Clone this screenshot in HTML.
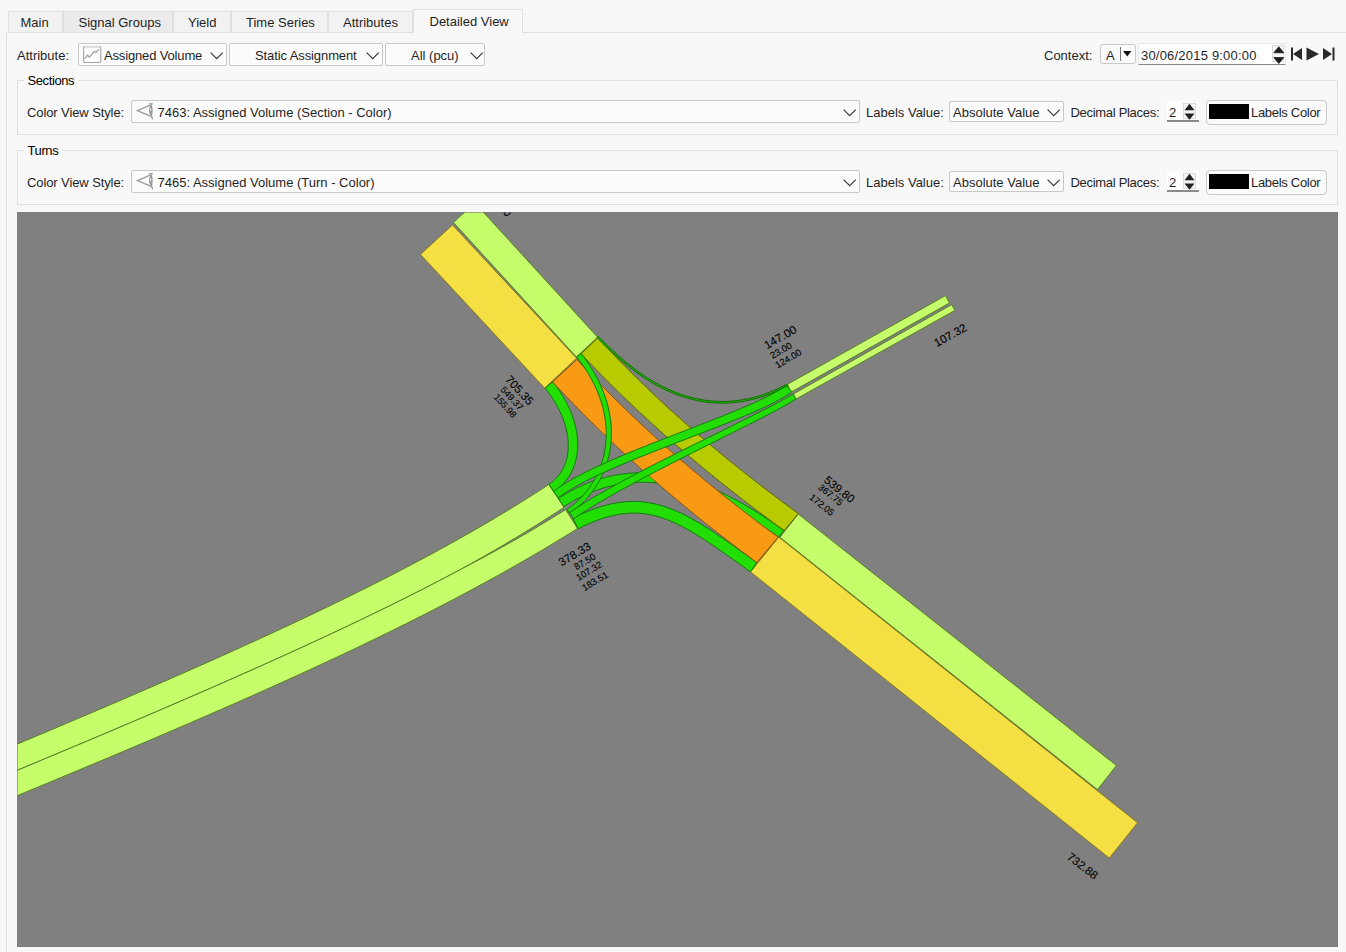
<!DOCTYPE html>
<html><head><meta charset="utf-8"><style>
html,body{margin:0;padding:0;width:1346px;height:952px;overflow:hidden;background:#f7f7f7;}
.t{position:absolute;font-family:"Liberation Sans",sans-serif;font-size:13px;line-height:15px;color:#1f1f1f;white-space:nowrap;}
svg text{font-family:"Liberation Sans",sans-serif;fill:#000;stroke:#000;stroke-width:0.12px;}
</style></head><body>
<div style="position:absolute;left:8px;top:11px;width:55px;height:21px;box-sizing:border-box;background:#f2f2f2;border:1px solid #e0e0e0;border-bottom:none;"></div>
<div class="t" style="left:20.5px;top:15px;">Main</div>
<div style="position:absolute;left:63px;top:11px;width:110px;height:21px;box-sizing:border-box;background:#ebebeb;border:1px solid #e0e0e0;border-bottom:none;"></div>
<div class="t" style="left:78.5px;top:15px;">Signal Groups</div>
<div style="position:absolute;left:173px;top:11px;width:58px;height:21px;box-sizing:border-box;background:#f2f2f2;border:1px solid #e0e0e0;border-bottom:none;"></div>
<div class="t" style="left:188px;top:15px;">Yield</div>
<div style="position:absolute;left:231px;top:11px;width:97px;height:21px;box-sizing:border-box;background:#f2f2f2;border:1px solid #e0e0e0;border-bottom:none;"></div>
<div class="t" style="left:246px;top:15px;">Time Series</div>
<div style="position:absolute;left:328px;top:11px;width:85px;height:21px;box-sizing:border-box;background:#f2f2f2;border:1px solid #e0e0e0;border-bottom:none;"></div>
<div class="t" style="left:343px;top:15px;">Attributes</div>
<div style="position:absolute;left:6px;top:32px;width:1340px;height:920px;box-sizing:border-box;background:#f8f8f8;border-left:1px solid #e0e0e0;border-top:1px solid #e0e0e0;"></div>
<div style="position:absolute;left:413px;top:9px;width:110px;height:24px;box-sizing:border-box;background:#f8f8f8;border:1px solid #e0e0e0;border-bottom:none;"></div>
<div class="t" style="left:429.5px;top:14px;">Detailed View</div>
<div class="t" style="left:17px;top:48px;">Attribute:</div>
<div style="position:absolute;left:78px;top:43px;width:149px;height:23px;box-sizing:border-box;background:#fbfbfb;border:1px solid #c9c9c9;border-radius:2px;"></div>
<svg style="position:absolute;left:83px;top:46px" width="19" height="18"><rect x="0.6" y="0.6" width="17.2" height="15.9" rx="1.2" fill="#fdfdfd" stroke="#a4a4a4" stroke-width="1.1"/><path d="M1.5 0.6 H17" stroke="#d6d6d6" stroke-width="1.2"/><path d="M1.6 12.7 L4.6 9.2 L6.5 11.1 L11.3 5.3 L12.9 6.5 L15.9 3.2" fill="none" stroke="#9c9c9c" stroke-width="1.25"/></svg>
<div class="t" style="left:104px;top:48px;letter-spacing:-0.15px;">Assigned Volume</div>
<svg style="position:absolute;left:209.5px;top:51.5px" width="14" height="8"><path d="M0.6 0.6 L6.7 6.7 L12.8 0.6" fill="none" stroke="#383838" stroke-width="1.15"/></svg>
<div style="position:absolute;left:229px;top:43px;width:154px;height:23px;box-sizing:border-box;background:#fbfbfb;border:1px solid #c9c9c9;border-radius:2px;"></div>
<div class="t" style="left:255px;top:48px;letter-spacing:-0.1px;">Static Assignment</div>
<svg style="position:absolute;left:365.5px;top:51.5px" width="14" height="8"><path d="M0.6 0.6 L6.7 6.7 L12.8 0.6" fill="none" stroke="#383838" stroke-width="1.15"/></svg>
<div style="position:absolute;left:385px;top:43px;width:100px;height:23px;box-sizing:border-box;background:#fbfbfb;border:1px solid #c9c9c9;border-radius:2px;"></div>
<div class="t" style="left:411px;top:48px;">All (pcu)</div>
<svg style="position:absolute;left:469.5px;top:51.5px" width="14" height="8"><path d="M0.6 0.6 L6.7 6.7 L12.8 0.6" fill="none" stroke="#383838" stroke-width="1.15"/></svg>
<div class="t" style="left:1044px;top:48px;">Context:</div>
<div style="position:absolute;left:1100px;top:44px;width:36px;height:20px;box-sizing:border-box;background:#fbfbfb;border:1px solid #c9c9c9;border-radius:3px;"></div>
<div class="t" style="left:1106px;top:48px;">A</div>
<div style="position:absolute;left:1120px;top:47px;width:1px;height:14px;background:#777;"></div>
<svg style="position:absolute;left:1123px;top:51px" width="9" height="6"><path d="M0 0 L8.5 0 L4.25 5.5 Z" fill="#111"/></svg>
<div style="position:absolute;left:1138px;top:43px;width:148px;height:22px;box-sizing:border-box;background:#fff;border:1px solid #e8e8e8;border-bottom:1.5px solid #8a8a8a;border-radius:2px 2px 0 0;"></div>
<div class="t" style="left:1141px;top:48px;letter-spacing:0.2px;">30/06/2015 9:00:00</div>
<div style="position:absolute;left:1272px;top:45px;width:12px;height:17px;box-sizing:border-box;background:#f6f6f6;border:1px solid #dadada;border-radius:1px;"></div>
<svg style="position:absolute;left:1271.5px;top:45.5px" width="14" height="19"><path d="M1.8 6.8 L6.8 0.8 L11.8 6.8 Z M1.8 11.5 L11.8 11.5 L6.8 17.5 Z" fill="#1e1e1e" stroke="#1e1e1e" stroke-width="0.8" stroke-linejoin="round"/></svg>
<svg style="position:absolute;left:1290px;top:47px" width="48" height="14"><path d="M1 0.5 h2 v13 h-2 Z M3 7 L12 1 L12 13 Z M16.5 0.5 L29 7 L16.5 13.5 Z M33 1 L42 7 L33 13 Z M42.5 0.5 h2 v13 h-2 Z" fill="#2a2a2a"/></svg>
<div style="position:absolute;left:17px;top:80px;width:1321px;height:55px;box-sizing:border-box;border:1px solid #e0e0e0;"></div>
<div style="position:absolute;left:24px;top:74px;width:53.5px;height:10px;background:#f8f8f8;"></div>
<div class="t" style="left:27.5px;top:73px;color:#000;letter-spacing:-0.4px;">Sections</div>
<div class="t" style="left:27px;top:104.9px;letter-spacing:-0.1px;">Color View Style:</div>
<div style="position:absolute;left:131px;top:100px;width:729px;height:23px;box-sizing:border-box;background:#fbfbfb;border:1px solid #c9c9c9;border-radius:2px;"></div>
<svg style="position:absolute;left:136px;top:103px" width="19" height="18"><g fill="none" stroke="#999" stroke-width="1.3"><path d="M15.5 1.6 L1.2 7.6 L15.8 13.7"/><path d="M13.3 0.6 L16.8 0.9 M15.8 13.7 L16.6 16.4"/></g><path d="M15.5 1.6 C12.3 4 12 11 15.8 13.7 C17 11 17 4 15.5 1.6 Z" fill="#9a9a9a"/><ellipse cx="14.6" cy="6.8" rx="0.7" ry="1.2" fill="#eee"/></svg>
<div class="t" style="left:157.5px;top:104.9px;">7463: Assigned Volume (Section - Color)</div>
<svg style="position:absolute;left:842.5px;top:109px" width="14" height="8"><path d="M0.6 0.6 L6.7 6.7 L12.8 0.6" fill="none" stroke="#383838" stroke-width="1.15"/></svg>
<div class="t" style="left:866px;top:104.9px;">Labels Value:</div>
<div style="position:absolute;left:949px;top:101px;width:115px;height:21px;box-sizing:border-box;background:#fbfbfb;border:1px solid #c9c9c9;border-radius:2px;"></div>
<div class="t" style="left:953px;top:104.9px;">Absolute Value</div>
<svg style="position:absolute;left:1046.5px;top:109px" width="14" height="8"><path d="M0.6 0.6 L6.7 6.7 L12.8 0.6" fill="none" stroke="#383838" stroke-width="1.15"/></svg>
<div class="t" style="left:1070.5px;top:104.9px;letter-spacing:-0.3px;">Decimal Places:</div>
<div style="position:absolute;left:1166.5px;top:101px;width:32px;height:21px;box-sizing:border-box;background:#fff;border-bottom:2px solid #8a8a8a;"></div>
<div class="t" style="left:1169px;top:104.9px;">2</div>
<div style="position:absolute;left:1183px;top:102.5px;width:13px;height:16px;box-sizing:border-box;background:#f6f6f6;border:1px solid #dadada;"></div>
<svg style="position:absolute;left:1183px;top:102.5px" width="13" height="17"><path d="M1.5 7.3 L6.5 0.8 L11.5 7.3 Z M1.5 10.5 L11.5 10.5 L6.5 16.8 Z" fill="#222"/></svg>
<div style="position:absolute;left:1206px;top:99.5px;width:121px;height:25px;box-sizing:border-box;background:#fbfbfb;border:1px solid #c9c9c9;border-radius:4px;"></div>
<div style="position:absolute;left:1209px;top:104px;width:40px;height:15px;background:#000;"></div>
<div class="t" style="left:1251px;top:104.9px;letter-spacing:-0.3px;">Labels Color</div>
<div style="position:absolute;left:17px;top:150px;width:1321px;height:55px;box-sizing:border-box;border:1px solid #e0e0e0;"></div>
<div style="position:absolute;left:24px;top:144px;width:38px;height:10px;background:#f8f8f8;"></div>
<div class="t" style="left:27.5px;top:143px;color:#000;letter-spacing:-0.4px;">Turns</div>
<div class="t" style="left:27px;top:174.9px;letter-spacing:-0.1px;">Color View Style:</div>
<div style="position:absolute;left:131px;top:170px;width:729px;height:23px;box-sizing:border-box;background:#fbfbfb;border:1px solid #c9c9c9;border-radius:2px;"></div>
<svg style="position:absolute;left:136px;top:173px" width="19" height="18"><g fill="none" stroke="#999" stroke-width="1.3"><path d="M15.5 1.6 L1.2 7.6 L15.8 13.7"/><path d="M13.3 0.6 L16.8 0.9 M15.8 13.7 L16.6 16.4"/></g><path d="M15.5 1.6 C12.3 4 12 11 15.8 13.7 C17 11 17 4 15.5 1.6 Z" fill="#9a9a9a"/><ellipse cx="14.6" cy="6.8" rx="0.7" ry="1.2" fill="#eee"/></svg>
<div class="t" style="left:157.5px;top:174.9px;">7465: Assigned Volume (Turn - Color)</div>
<svg style="position:absolute;left:842.5px;top:179px" width="14" height="8"><path d="M0.6 0.6 L6.7 6.7 L12.8 0.6" fill="none" stroke="#383838" stroke-width="1.15"/></svg>
<div class="t" style="left:866px;top:174.9px;">Labels Value:</div>
<div style="position:absolute;left:949px;top:171px;width:115px;height:21px;box-sizing:border-box;background:#fbfbfb;border:1px solid #c9c9c9;border-radius:2px;"></div>
<div class="t" style="left:953px;top:174.9px;">Absolute Value</div>
<svg style="position:absolute;left:1046.5px;top:179px" width="14" height="8"><path d="M0.6 0.6 L6.7 6.7 L12.8 0.6" fill="none" stroke="#383838" stroke-width="1.15"/></svg>
<div class="t" style="left:1070.5px;top:174.9px;letter-spacing:-0.3px;">Decimal Places:</div>
<div style="position:absolute;left:1166.5px;top:171px;width:32px;height:21px;box-sizing:border-box;background:#fff;border-bottom:2px solid #8a8a8a;"></div>
<div class="t" style="left:1169px;top:174.9px;">2</div>
<div style="position:absolute;left:1183px;top:172.5px;width:13px;height:16px;box-sizing:border-box;background:#f6f6f6;border:1px solid #dadada;"></div>
<svg style="position:absolute;left:1183px;top:172.5px" width="13" height="17"><path d="M1.5 7.3 L6.5 0.8 L11.5 7.3 Z M1.5 10.5 L11.5 10.5 L6.5 16.8 Z" fill="#222"/></svg>
<div style="position:absolute;left:1206px;top:169.5px;width:121px;height:25px;box-sizing:border-box;background:#fbfbfb;border:1px solid #c9c9c9;border-radius:4px;"></div>
<div style="position:absolute;left:1209px;top:174px;width:40px;height:15px;background:#000;"></div>
<div class="t" style="left:1251px;top:174.9px;letter-spacing:-0.3px;">Labels Color</div>
<svg style="position:absolute;left:0;top:0" width="1346" height="952" viewBox="0 0 1346 952">
<defs><clipPath id="cv"><rect x="17" y="212" width="1321" height="735"/></clipPath></defs>
<rect x="17" y="212" width="1321" height="735" fill="#808080"/>
<g clip-path="url(#cv)">
<path d="M420.40,254.40 L452.50,224.90 L576.60,358.20 L544.70,388.20Z" fill="#f4e043" stroke="#857820" stroke-width="1.0" stroke-linejoin="miter"/>
<path d="M453.50,222.50 L474.70,202.70 L597.60,337.20 L576.40,357.00Z" fill="#c6fd6b" stroke="#5a7e2a" stroke-width="1.0" stroke-linejoin="miter"/>
<path d="M750.50,571.90 L778.80,537.10 L1137.60,822.70 L1109.30,858.10Z" fill="#f4e043" stroke="#857820" stroke-width="1.0" stroke-linejoin="miter"/>
<path d="M779.90,537.30 L798.30,514.00 L1116.40,765.50 L1097.50,789.60Z" fill="#c6fd6b" stroke="#5a7e2a" stroke-width="1.0" stroke-linejoin="miter"/>
<path d="M787.50,384.30 L945.50,295.60 L949.40,303.10 L790.80,392.30Z" fill="#c6fd6b" stroke="#5a7e2a" stroke-width="1.0" stroke-linejoin="miter"/>
<path d="M793.40,394.00 L951.70,304.60 L954.90,310.40 L795.60,399.30Z" fill="#c6fd6b" stroke="#5a7e2a" stroke-width="1.0" stroke-linejoin="miter"/>
<path d="M0.00,751.30 L12.94,745.89 L25.73,740.53 L38.35,735.22 L50.82,729.97 L63.14,724.76 L75.31,719.61 L87.33,714.50 L99.20,709.44 L110.92,704.43 L122.50,699.45 L133.93,694.53 L145.22,689.64 L156.38,684.80 L167.39,679.99 L178.27,675.22 L189.02,670.49 L199.63,665.80 L210.12,661.14 L220.47,656.51 L230.70,651.91 L240.80,647.35 L250.78,642.81 L260.63,638.30 L270.37,633.82 L279.98,629.37 L289.48,624.94 L298.87,620.53 L308.14,616.15 L317.30,611.79 L326.35,607.44 L335.29,603.12 L344.13,598.81 L352.86,594.52 L361.48,590.24 L370.01,585.98 L378.44,581.72 L386.77,577.48 L395.00,573.25 L403.14,569.03 L411.18,564.82 L419.14,560.61 L427.01,556.40 L434.79,552.20 L442.48,548.01 L450.09,543.81 L457.62,539.61 L465.06,535.42 L472.43,531.22 L479.72,527.01 L486.94,522.80 L494.09,518.59 L501.16,514.37 L508.16,510.14 L515.09,505.89 L521.96,501.64 L528.76,497.38 L535.50,493.10 L542.18,488.81 L548.80,484.50 L564.14,507.22 L557.51,511.60 L550.79,515.96 L543.97,520.32 L537.07,524.68 L530.07,529.03 L522.98,533.38 L515.80,537.72 L508.52,542.06 L501.15,546.41 L493.68,550.75 L486.12,555.09 L478.46,559.44 L470.71,563.78 L462.86,568.13 L454.90,572.47 L446.81,576.74 L438.62,581.03 L430.34,585.31 L421.95,589.61 L413.47,593.91 L404.89,598.23 L396.21,602.55 L387.43,606.88 L378.55,611.23 L369.56,615.59 L360.48,619.96 L351.29,624.34 L341.99,628.74 L332.60,633.16 L323.10,637.59 L313.50,642.05 L303.79,646.52 L293.97,651.01 L284.05,655.52 L274.02,660.05 L263.89,664.60 L253.64,669.18 L243.29,673.78 L232.83,678.41 L222.26,683.06 L211.59,687.74 L200.80,692.44 L189.90,697.18 L178.88,701.94 L167.76,706.74 L156.53,711.56 L145.18,716.42 L133.71,721.31 L122.14,726.23 L110.45,731.19 L98.64,736.18 L86.72,741.21 L74.69,746.27 L62.53,751.38 L50.26,756.52 L37.87,761.70 L25.37,766.93 L12.74,772.19 L0.00,777.50Z" fill="#c6fd6b" stroke="#5a7e2a" stroke-width="1.0" stroke-linejoin="miter"/>
<path d="M0.00,777.50 L12.74,772.19 L25.37,766.93 L37.87,761.70 L50.26,756.52 L62.53,751.38 L74.69,746.27 L86.72,741.21 L98.64,736.18 L110.45,731.19 L122.14,726.23 L133.71,721.31 L145.18,716.42 L156.53,711.56 L167.76,706.74 L178.88,701.94 L189.90,697.18 L200.80,692.44 L211.59,687.74 L222.26,683.06 L232.83,678.41 L243.29,673.78 L253.64,669.18 L263.89,664.60 L274.02,660.05 L284.05,655.52 L293.97,651.01 L303.79,646.52 L313.50,642.05 L323.10,637.59 L332.60,633.16 L341.99,628.74 L351.29,624.34 L360.48,619.96 L369.56,615.59 L378.55,611.23 L387.43,606.88 L396.21,602.55 L404.89,598.23 L413.47,593.91 L421.95,589.61 L430.34,585.31 L438.62,581.03 L446.81,576.74 L454.90,572.47 L462.92,568.26 L470.87,564.08 L478.71,559.89 L486.46,555.71 L494.12,551.53 L501.69,547.35 L509.16,543.17 L516.54,538.99 L523.83,534.80 L531.02,530.61 L538.13,526.42 L545.15,522.22 L552.07,518.01 L558.91,513.80 L565.66,509.58 L577.60,528.50 L570.07,533.19 L562.49,537.85 L554.85,542.48 L547.16,547.10 L539.42,551.69 L531.62,556.27 L523.76,560.82 L515.84,565.36 L507.86,569.88 L499.82,574.39 L491.71,578.88 L483.54,583.36 L475.30,587.83 L466.99,592.29 L458.61,596.74 L450.17,601.19 L441.65,605.62 L433.05,610.06 L424.38,614.49 L415.64,618.91 L406.82,623.34 L397.91,627.76 L388.93,632.19 L379.86,636.62 L370.72,641.05 L361.48,645.49 L352.16,649.93 L342.75,654.38 L333.26,658.84 L323.67,663.31 L313.99,667.79 L304.22,672.28 L294.35,676.79 L284.39,681.31 L274.33,685.85 L264.17,690.41 L253.91,694.98 L243.55,699.57 L233.08,704.19 L222.51,708.82 L211.84,713.48 L201.06,718.17 L190.17,722.88 L179.16,727.62 L168.05,732.38 L156.83,737.18 L145.49,742.01 L134.03,746.87 L122.46,751.76 L110.77,756.69 L98.96,761.65 L87.03,766.65 L74.98,771.69 L62.80,776.77 L50.49,781.89 L38.06,787.05 L25.51,792.26 L12.82,797.50 L0.00,802.80Z" fill="#c6fd6b" stroke="#5a7e2a" stroke-width="1.0" stroke-linejoin="miter"/>
<path d="M558.29,498.30 L562.92,495.43 L567.55,492.74 L572.19,490.23 L576.84,487.90 L581.50,485.74 L586.16,483.75 L590.84,481.93 L595.52,480.28 L600.21,478.80 L604.90,477.49 L609.61,476.34 L614.32,475.36 L619.03,474.54 L623.76,473.88 L628.49,473.38 L633.23,473.04 L637.97,472.86 L642.72,472.83 L647.47,472.95 L652.23,473.22 L657.00,473.64 L661.77,474.21 L666.54,474.92 L671.32,475.78 L676.11,476.77 L680.90,477.91 L685.70,479.18 L690.51,480.58 L695.32,482.12 L700.14,483.79 L704.97,485.59 L709.80,487.51 L714.65,489.56 L719.50,491.73 L724.37,494.03 L729.24,496.44 L734.12,498.97 L739.02,501.62 L743.93,504.38 L748.85,507.26 L753.78,510.24 L758.72,513.34 L763.68,516.54 L768.66,519.85 L773.64,523.27 L778.65,526.78 L783.67,530.40 L778.73,537.20 L773.78,533.67 L768.84,530.24 L763.92,526.91 L759.02,523.69 L754.15,520.58 L749.29,517.58 L744.45,514.69 L739.63,511.92 L734.83,509.26 L730.06,506.71 L725.30,504.28 L720.56,501.97 L715.83,499.78 L711.13,497.71 L706.45,495.76 L701.78,493.94 L697.13,492.25 L692.50,490.68 L687.89,489.24 L683.29,487.93 L678.72,486.75 L674.15,485.71 L669.61,484.80 L665.08,484.02 L660.57,483.38 L656.07,482.88 L651.59,482.52 L647.12,482.29 L642.66,482.21 L638.22,482.27 L633.78,482.48 L629.36,482.83 L624.95,483.33 L620.55,483.98 L616.15,484.77 L611.76,485.72 L607.38,486.82 L603.00,488.08 L598.63,489.50 L594.26,491.07 L589.89,492.80 L585.53,494.70 L581.16,496.76 L576.80,498.99 L572.44,501.39 L568.07,503.96 L563.71,506.70Z" fill="#22de04" stroke="#137a10" stroke-width="1.0" stroke-linejoin="miter"/>
<path d="M572.83,518.24 L577.41,515.99 L581.89,513.91 L586.30,512.00 L590.63,510.25 L594.89,508.66 L599.09,507.24 L603.22,505.98 L607.30,504.87 L611.32,503.92 L615.29,503.13 L619.21,502.49 L623.09,502.01 L626.93,501.67 L630.74,501.49 L634.50,501.46 L638.23,501.58 L641.93,501.84 L645.61,502.24 L649.25,502.78 L652.88,503.46 L656.48,504.27 L660.07,505.21 L663.64,506.28 L667.21,507.47 L670.77,508.78 L674.32,510.21 L677.88,511.75 L681.45,513.40 L685.02,515.16 L688.62,517.03 L692.23,519.00 L695.87,521.07 L699.55,523.24 L703.25,525.50 L707.00,527.86 L710.80,530.31 L714.64,532.85 L718.54,535.47 L722.50,538.18 L726.52,540.97 L730.61,543.84 L734.77,546.79 L739.02,549.82 L743.34,552.92 L747.76,556.09 L752.26,559.34 L756.87,562.65 L750.33,571.75 L745.72,568.44 L741.21,565.21 L736.80,562.05 L732.48,558.98 L728.26,555.98 L724.12,553.06 L720.07,550.23 L716.09,547.49 L712.19,544.84 L708.37,542.28 L704.61,539.81 L700.91,537.44 L697.28,535.17 L693.70,533.00 L690.18,530.94 L686.70,528.97 L683.27,527.12 L679.88,525.37 L676.53,523.73 L673.21,522.21 L669.92,520.80 L666.65,519.50 L663.41,518.32 L660.19,517.25 L656.98,516.30 L653.77,515.48 L650.57,514.77 L647.36,514.18 L644.15,513.72 L640.92,513.37 L637.67,513.16 L634.39,513.07 L631.08,513.11 L627.73,513.28 L624.34,513.59 L620.89,514.03 L617.39,514.61 L613.83,515.33 L610.19,516.20 L606.49,517.22 L602.71,518.39 L598.85,519.72 L594.90,521.20 L590.86,522.84 L586.73,524.65 L582.50,526.62 L578.17,528.76Z" fill="#22de04" stroke="#137a10" stroke-width="1.0" stroke-linejoin="miter"/>
<path d="M552.81,381.69 L554.89,384.38 L556.88,387.09 L558.77,389.80 L560.57,392.52 L562.28,395.24 L563.90,397.96 L565.43,400.69 L566.86,403.42 L568.21,406.14 L569.47,408.87 L570.64,411.58 L571.71,414.29 L572.70,417.00 L573.60,419.69 L574.41,422.37 L575.12,425.04 L575.75,427.70 L576.30,430.34 L576.75,432.96 L577.11,435.56 L577.39,438.14 L577.57,440.70 L577.67,443.24 L577.68,445.75 L577.60,448.23 L577.43,450.68 L577.18,453.10 L576.83,455.49 L576.40,457.84 L575.88,460.16 L575.27,462.43 L574.57,464.67 L573.79,466.86 L572.92,469.00 L571.95,471.10 L570.91,473.15 L569.77,475.14 L568.55,477.08 L567.25,478.96 L565.86,480.78 L564.38,482.54 L562.82,484.24 L561.18,485.86 L559.46,487.42 L557.66,488.91 L555.78,490.33 L553.83,491.67 L548.97,484.33 L550.59,483.19 L552.14,482.00 L553.62,480.75 L555.02,479.44 L556.36,478.08 L557.62,476.67 L558.81,475.21 L559.94,473.70 L560.99,472.14 L561.98,470.53 L562.89,468.88 L563.74,467.17 L564.51,465.43 L565.22,463.63 L565.85,461.80 L566.41,459.92 L566.90,458.00 L567.32,456.04 L567.66,454.04 L567.93,452.00 L568.13,449.92 L568.25,447.81 L568.29,445.66 L568.26,443.49 L568.15,441.28 L567.97,439.04 L567.70,436.77 L567.35,434.47 L566.93,432.15 L566.42,429.81 L565.84,427.44 L565.17,425.05 L564.42,422.65 L563.59,420.22 L562.67,417.79 L561.67,415.33 L560.58,412.87 L559.41,410.39 L558.16,407.91 L556.82,405.42 L555.39,402.92 L553.88,400.42 L552.28,397.92 L550.59,395.41 L548.81,392.91 L546.94,390.41 L544.99,387.91Z" fill="#22de04" stroke="#137a10" stroke-width="1.0" stroke-linejoin="miter"/>
<path d="M552.60,381.90 L556.34,385.93 L560.11,389.96 L563.90,393.98 L567.72,397.99 L571.57,401.99 L575.44,405.98 L579.34,409.96 L583.26,413.94 L587.21,417.91 L591.19,421.87 L595.19,425.82 L599.22,429.76 L603.28,433.69 L607.36,437.62 L611.47,441.54 L615.60,445.45 L619.76,449.35 L623.95,453.24 L628.16,457.12 L632.40,461.00 L636.67,464.87 L640.96,468.73 L645.28,472.58 L649.63,476.42 L654.00,480.25 L658.39,484.08 L662.82,487.90 L667.27,491.71 L671.74,495.51 L676.25,499.30 L680.77,503.08 L685.33,506.86 L689.91,510.63 L694.52,514.39 L699.15,518.14 L703.81,521.88 L708.50,525.62 L713.21,529.34 L717.95,533.06 L722.71,536.77 L727.50,540.47 L732.32,544.16 L737.16,547.85 L742.03,551.52 L746.93,555.19 L751.85,558.85 L756.80,562.50 L778.30,537.10 L771.49,532.33 L766.67,528.74 L761.87,525.15 L757.09,521.54 L752.35,517.93 L747.63,514.32 L742.93,510.69 L738.27,507.06 L733.63,503.42 L729.01,499.77 L724.43,496.11 L719.86,492.45 L715.33,488.78 L710.82,485.10 L706.34,481.41 L701.88,477.72 L697.46,474.02 L693.05,470.31 L688.68,466.60 L684.33,462.87 L680.00,459.14 L675.71,455.40 L671.44,451.66 L667.19,447.90 L662.98,444.14 L658.78,440.37 L654.62,436.60 L650.48,432.81 L646.37,429.02 L642.28,425.23 L638.22,421.42 L634.19,417.61 L630.18,413.79 L626.20,409.96 L622.25,406.12 L618.32,402.28 L614.42,398.43 L610.54,394.57 L606.70,390.71 L602.87,386.83 L599.08,382.95 L595.31,379.07 L591.56,375.17 L587.84,371.27 L584.15,367.36 L580.49,363.44 L576.85,359.52Z" fill="#f89a14" stroke="#8a5412" stroke-width="1.0" stroke-linejoin="miter"/>
<path d="M581.20,353.80 L585.64,358.64 L589.32,362.51 L593.02,366.36 L596.74,370.21 L600.50,374.06 L604.27,377.89 L608.08,381.72 L611.91,385.54 L615.77,389.35 L619.65,393.15 L623.56,396.95 L627.49,400.74 L631.45,404.52 L635.44,408.30 L639.45,412.07 L643.49,415.83 L647.55,419.58 L651.65,423.32 L655.76,427.06 L659.91,430.79 L664.07,434.51 L668.27,438.23 L672.49,441.94 L676.74,445.64 L681.01,449.33 L685.31,453.01 L689.64,456.69 L693.99,460.36 L698.37,464.02 L702.78,467.68 L707.21,471.33 L711.66,474.97 L716.15,478.60 L720.66,482.22 L725.19,485.84 L729.76,489.45 L734.34,493.05 L738.96,496.65 L743.60,500.23 L748.27,503.81 L752.96,507.39 L757.68,510.95 L762.43,514.51 L767.20,518.06 L772.00,521.60 L776.82,525.13 L784.30,530.40 L798.30,513.60 L789.93,507.43 L785.18,503.93 L780.46,500.42 L775.76,496.90 L771.10,493.38 L766.45,489.85 L761.84,486.31 L757.25,482.77 L752.69,479.21 L748.15,475.65 L743.64,472.09 L739.16,468.52 L734.71,464.94 L730.28,461.35 L725.87,457.76 L721.50,454.16 L717.15,450.55 L712.82,446.93 L708.53,443.31 L704.26,439.69 L700.01,436.05 L695.80,432.41 L691.60,428.76 L687.44,425.11 L683.30,421.44 L679.19,417.77 L675.10,414.10 L671.04,410.42 L667.01,406.73 L663.00,403.03 L659.02,399.33 L655.07,395.62 L651.14,391.90 L647.24,388.18 L643.36,384.45 L639.51,380.71 L635.69,376.97 L631.89,373.22 L628.12,369.46 L624.38,365.70 L620.66,361.93 L616.96,358.15 L613.30,354.37 L609.66,350.58 L606.04,346.78 L602.45,342.98 L597.60,338.00Z" fill="#b8cb00" stroke="#606a00" stroke-width="1.0" stroke-linejoin="miter"/>
<path d="M581.10,353.56 L584.19,357.61 L587.10,361.66 L589.84,365.72 L592.40,369.79 L594.79,373.85 L597.01,377.92 L599.06,381.98 L600.94,386.03 L602.66,390.08 L604.22,394.12 L605.62,398.14 L606.86,402.15 L607.95,406.13 L608.88,410.10 L609.66,414.05 L610.30,417.97 L610.79,421.86 L611.14,425.72 L611.34,429.55 L611.41,433.34 L611.34,437.09 L611.13,440.81 L610.80,444.47 L610.33,448.10 L609.74,451.67 L609.02,455.20 L608.18,458.67 L607.22,462.09 L606.15,465.44 L604.95,468.74 L603.65,471.98 L602.24,475.15 L600.71,478.25 L599.09,481.28 L597.36,484.24 L595.53,487.12 L593.60,489.93 L591.58,492.65 L589.46,495.30 L587.25,497.86 L584.96,500.33 L582.58,502.72 L580.11,505.01 L577.57,507.21 L574.94,509.31 L572.24,511.31 L569.47,513.22 L566.93,509.38 L569.55,507.56 L572.10,505.64 L574.57,503.63 L576.97,501.53 L579.30,499.34 L581.54,497.06 L583.70,494.70 L585.78,492.26 L587.77,489.74 L589.68,487.14 L591.49,484.47 L593.20,481.72 L594.83,478.91 L596.35,476.02 L597.78,473.07 L599.10,470.06 L600.31,466.98 L601.42,463.85 L602.43,460.66 L603.32,457.41 L604.09,454.12 L604.75,450.77 L605.29,447.37 L605.72,443.93 L606.01,440.44 L606.19,436.92 L606.23,433.35 L606.15,429.75 L605.93,426.11 L605.58,422.44 L605.10,418.73 L604.47,415.00 L603.70,411.24 L602.79,407.46 L601.73,403.65 L600.52,399.83 L599.16,395.98 L597.65,392.12 L595.98,388.25 L594.16,384.37 L592.17,380.47 L590.01,376.57 L587.69,372.66 L585.21,368.76 L582.55,364.85 L579.71,360.94 L576.70,357.04Z" fill="#22de04" stroke="#137a10" stroke-width="1.0" stroke-linejoin="miter"/>
<path d="M553.53,491.35 L556.72,488.96 L560.16,486.57 L563.84,484.17 L567.76,481.78 L571.91,479.38 L576.26,476.98 L580.82,474.57 L585.57,472.16 L590.50,469.74 L595.59,467.33 L600.84,464.90 L606.22,462.48 L611.74,460.06 L617.38,457.63 L623.12,455.21 L628.95,452.79 L634.86,450.37 L640.84,447.95 L646.88,445.54 L652.96,443.14 L659.06,440.74 L665.19,438.35 L671.32,435.97 L677.45,433.60 L683.55,431.25 L689.62,428.90 L695.65,426.57 L701.61,424.26 L707.51,421.96 L713.32,419.68 L719.04,417.42 L724.65,415.18 L730.14,412.96 L735.49,410.77 L740.69,408.60 L745.73,406.45 L750.60,404.34 L755.28,402.25 L759.76,400.19 L764.02,398.16 L768.06,396.17 L771.86,394.22 L775.39,392.31 L778.66,390.44 L781.64,388.62 L784.31,386.85 L786.66,385.16 L791.74,391.84 L789.06,393.77 L786.12,395.70 L782.91,397.65 L779.45,399.62 L775.75,401.62 L771.81,403.63 L767.65,405.68 L763.28,407.74 L758.70,409.83 L753.94,411.95 L749.01,414.09 L743.90,416.25 L738.65,418.43 L733.25,420.64 L727.73,422.86 L722.09,425.11 L716.34,427.37 L710.51,429.65 L704.59,431.94 L698.61,434.25 L692.58,436.58 L686.50,438.91 L680.40,441.26 L674.28,443.62 L668.15,445.98 L662.04,448.36 L655.94,450.74 L649.89,453.13 L643.87,455.52 L637.92,457.91 L632.04,460.31 L626.25,462.71 L620.55,465.10 L614.97,467.50 L609.51,469.89 L604.18,472.27 L599.01,474.65 L594.00,477.02 L589.17,479.38 L584.52,481.73 L580.08,484.07 L575.85,486.39 L571.86,488.69 L568.11,490.97 L564.62,493.23 L561.40,495.46 L558.47,497.65Z" fill="#22de04" stroke="#137a10" stroke-width="1.0" stroke-linejoin="miter"/>
<path d="M569.50,512.60 L572.96,510.21 L576.64,507.76 L580.52,505.26 L584.59,502.71 L588.85,500.11 L593.28,497.47 L597.88,494.79 L602.62,492.07 L607.51,489.31 L612.54,486.53 L617.68,483.71 L622.93,480.87 L628.29,478.02 L633.73,475.14 L639.25,472.25 L644.84,469.35 L650.49,466.44 L656.18,463.53 L661.91,460.62 L667.67,457.72 L673.44,454.82 L679.21,451.93 L684.97,449.06 L690.72,446.20 L696.44,443.37 L702.12,440.57 L707.74,437.79 L713.31,435.05 L718.80,432.34 L724.21,429.67 L729.53,427.05 L734.74,424.47 L739.84,421.95 L744.81,419.48 L749.64,417.06 L754.32,414.71 L758.85,412.43 L763.20,410.21 L767.37,408.07 L771.35,406.01 L775.12,404.02 L778.68,402.13 L782.02,400.32 L785.11,398.60 L787.96,396.98 L790.54,395.46 L792.84,394.05 L795.96,398.95 L793.57,400.45 L790.93,402.05 L788.04,403.74 L784.91,405.52 L781.55,407.39 L777.97,409.34 L774.18,411.38 L770.19,413.49 L766.02,415.68 L761.66,417.93 L757.14,420.26 L752.46,422.65 L747.64,425.10 L742.67,427.61 L737.59,430.18 L732.39,432.79 L727.09,435.45 L721.69,438.15 L716.21,440.89 L710.67,443.67 L705.06,446.48 L699.40,449.32 L693.71,452.18 L687.98,455.07 L682.25,457.97 L676.50,460.88 L670.76,463.81 L665.04,466.74 L659.34,469.68 L653.68,472.61 L648.07,475.55 L642.52,478.47 L637.04,481.38 L631.64,484.28 L626.33,487.15 L621.13,490.01 L616.04,492.84 L611.08,495.63 L606.25,498.40 L601.57,501.12 L597.05,503.81 L592.70,506.44 L588.53,509.03 L584.56,511.57 L580.78,514.04 L577.23,516.45 L573.90,518.80Z" fill="#22de04" stroke="#137a10" stroke-width="1.0" stroke-linejoin="miter"/>
<path d="M598.50,336.60 L600.28,338.39 L602.17,340.28 L604.18,342.27 L606.29,344.35 L608.51,346.51 L610.84,348.74 L613.28,351.03 L615.82,353.37 L618.47,355.75 L621.22,358.16 L624.08,360.60 L627.04,363.05 L630.10,365.50 L633.26,367.95 L636.52,370.38 L639.87,372.79 L643.32,375.16 L646.87,377.49 L650.52,379.77 L654.25,381.99 L658.08,384.14 L662.00,386.20 L666.01,388.18 L670.12,390.05 L674.30,391.82 L678.58,393.47 L682.94,394.99 L687.39,396.37 L691.92,397.61 L696.54,398.69 L701.24,399.61 L706.02,400.36 L710.88,400.92 L715.82,401.28 L720.83,401.45 L725.93,401.41 L731.10,401.14 L736.35,400.64 L741.68,399.91 L747.08,398.92 L752.55,397.68 L758.10,396.17 L763.72,394.38 L769.41,392.30 L775.17,389.93 L781.00,387.25 L786.90,384.25 L787.70,385.75 L781.74,388.78 L775.85,391.48 L770.03,393.88 L764.27,395.98 L758.58,397.80 L752.97,399.33 L747.42,400.59 L741.95,401.59 L736.55,402.33 L731.23,402.83 L725.98,403.10 L720.81,403.15 L715.72,402.98 L710.72,402.61 L705.79,402.04 L700.94,401.29 L696.18,400.36 L691.51,399.26 L686.91,398.00 L682.41,396.60 L677.99,395.06 L673.67,393.39 L669.43,391.61 L665.28,389.71 L661.23,387.72 L657.27,385.63 L653.40,383.46 L649.63,381.23 L645.95,378.93 L642.38,376.57 L638.89,374.18 L635.51,371.75 L632.23,369.30 L629.05,366.83 L625.96,364.36 L622.99,361.90 L620.11,359.45 L617.34,357.02 L614.68,354.62 L612.12,352.27 L609.67,349.97 L607.33,347.73 L605.10,345.57 L602.98,343.48 L600.97,341.48 L599.08,339.59 L597.30,337.80Z" fill="#1fb800" stroke="#0e7000" stroke-width="1.0" stroke-linejoin="miter"/>
<text x="0" y="0" transform="translate(504.8,380.1) rotate(47.5)" font-size="11.5">705.35</text>
<text x="0" y="0" transform="translate(500,390) rotate(47.5)" font-size="9.3">549.37</text>
<text x="0" y="0" transform="translate(493.3,397.5) rotate(47.5)" font-size="9.3">155.98</text>
<text x="0" y="0" transform="translate(561.5,566.5) rotate(-31)" font-size="11.5">378.33</text>
<text x="0" y="0" transform="translate(576.5,570.3) rotate(-31)" font-size="9.3">87.50</text>
<text x="0" y="0" transform="translate(578.5,581) rotate(-31)" font-size="9.3">107.32</text>
<text x="0" y="0" transform="translate(584.5,591.2) rotate(-31)" font-size="9.3">183.51</text>
<text x="0" y="0" transform="translate(767,349.5) rotate(-30)" font-size="11.5">147.00</text>
<text x="0" y="0" transform="translate(772.5,359) rotate(-30)" font-size="9.3">23.00</text>
<text x="0" y="0" transform="translate(777.5,368.5) rotate(-30)" font-size="9.3">124.00</text>
<text x="0" y="0" transform="translate(823.3,481.6) rotate(38.5)" font-size="11.5">539.80</text>
<text x="0" y="0" transform="translate(817.6,488.6) rotate(38.5)" font-size="9.3">367.75</text>
<text x="0" y="0" transform="translate(808.8,498.5) rotate(38.5)" font-size="9.3">172.05</text>
<text x="0" y="0" transform="translate(936.8,347.2) rotate(-29)" font-size="11.5">107.32</text>
<text x="0" y="0" transform="translate(1066.3,858.3) rotate(38)" font-size="11.5">732.88</text>
<text x="0" y="0" transform="translate(502.5,212.8) rotate(47.5)" font-size="11.5">0</text>
</g>
<rect x="17.5" y="212.5" width="1320" height="734" fill="none" stroke="#757a85" stroke-width="1" opacity="0.6"/>
</svg>
</body></html>
